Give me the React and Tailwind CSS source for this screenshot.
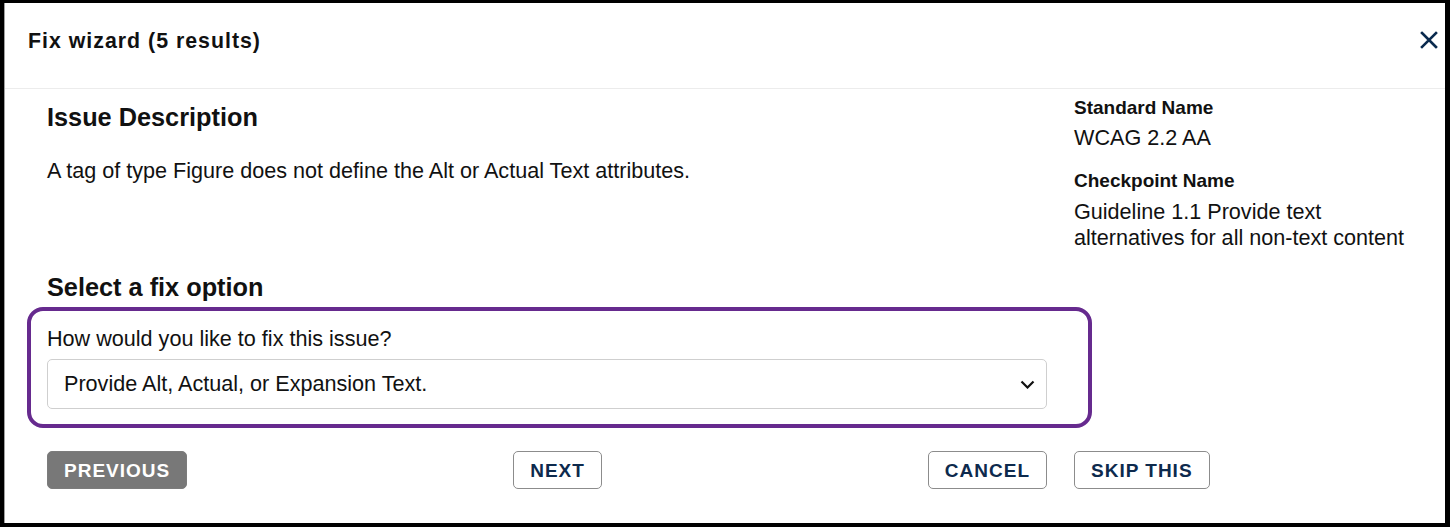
import React from "react";

const font = { fontFamily: '"Liberation Sans", Arial, sans-serif' };

function OutlineButton({ children }) {
  return (
    <button className="h-[38px] rounded-[5px] border border-[#8c8c8c] bg-white px-[16px] text-[19px] font-bold leading-none tracking-[1px] text-[#0d2a4d]">
      {children}
    </button>
  );
}

export default function App() {
  return (
    <div className="h-[527px] w-[1450px] bg-black pt-[3px] pr-[5px] pb-[4px] pl-[4px]" style={font}>
      <div className="flex h-full flex-col border-l border-[#a0a0a0] bg-white text-[#111111]">
        <div className="flex h-[86px] items-start justify-between border-b border-[#ececec] pt-[24px] pr-[6px] pl-[23px]">
          <h1 className="text-[21.33px] font-bold leading-[28px] tracking-[1px] text-[#111111]">
            Fix wizard (5 results)
          </h1>
          <button className="-mt-[1px] flex h-[28px] w-[20px] items-center justify-center text-[#0a2a4e]" aria-label="Close">
            <svg width="18" height="18" viewBox="0 0 18 18" fill="none" stroke="currentColor" strokeWidth="2.6" strokeLinecap="square">
              <path d="M2 2L16 16M16 2L2 16" />
            </svg>
          </button>
        </div>

        <div className="flex flex-col pr-[25px] pl-[42px]">
          <div className="flex gap-[27px]">
            <div className="w-[1000px] shrink-0 pt-[12px]">
              <h2 className="text-[25.3px] font-bold leading-[32px]">Issue Description</h2>
              <p className="mt-[24px] text-[21.6px] leading-[28px]">
                A tag of type Figure does not define the Alt or Actual Text attributes.
              </p>
            </div>
            <div className="flex-1 pt-[7px]">
              <div className="text-[19px] font-bold leading-[24px]">Standard Name</div>
              <div className="mt-[5px] text-[21.6px] leading-[26px]">WCAG 2.2 AA</div>
              <div className="mt-[18px] text-[19px] font-bold leading-[24px]">Checkpoint Name</div>
              <div className="mt-[6px] text-[21.6px] leading-[26px]">
                Guideline 1.1 Provide text alternatives for all non-text content
              </div>
            </div>
          </div>

          <h2 className="mt-[20px] text-[25.3px] font-bold leading-[32px]">Select a fix option</h2>

          <div className="mt-[4px] -ml-[20px] w-[1065px] rounded-[16px] border-4 border-[#662a8e] pt-[14px] pr-[41px] pb-[15px] pl-[16px]">
            <div className="text-[21.6px] leading-[28px]">How would you like to fix this issue?</div>
            <div className="mt-[6px] flex h-[50px] w-[1000px] items-center justify-between rounded-[5px] border border-[#cfcfcf] bg-white pr-[11px] pl-[16px]">
              <span className="text-[21.6px] leading-[28px]">Provide Alt, Actual, or Expansion Text.</span>
              <svg width="15" height="9" viewBox="0 0 15 9" fill="none" stroke="#111111" strokeWidth="2.2">
                <path d="M1.5 1.5L7.5 7.5L13.5 1.5" />
              </svg>
            </div>
          </div>

          <div className="mt-[23px] flex gap-[27px]">
            <div className="flex w-[1000px] shrink-0 items-center justify-between">
              <button className="h-[38px] rounded-[5px] border border-[#7c7c7c] bg-[#787878] px-[16px] text-[19px] font-bold leading-none tracking-[1px] text-white">
                PREVIOUS
              </button>
              <OutlineButton>NEXT</OutlineButton>
              <OutlineButton>CANCEL</OutlineButton>
            </div>
            <OutlineButton>SKIP THIS</OutlineButton>
          </div>
        </div>
      </div>
    </div>
  );
}
